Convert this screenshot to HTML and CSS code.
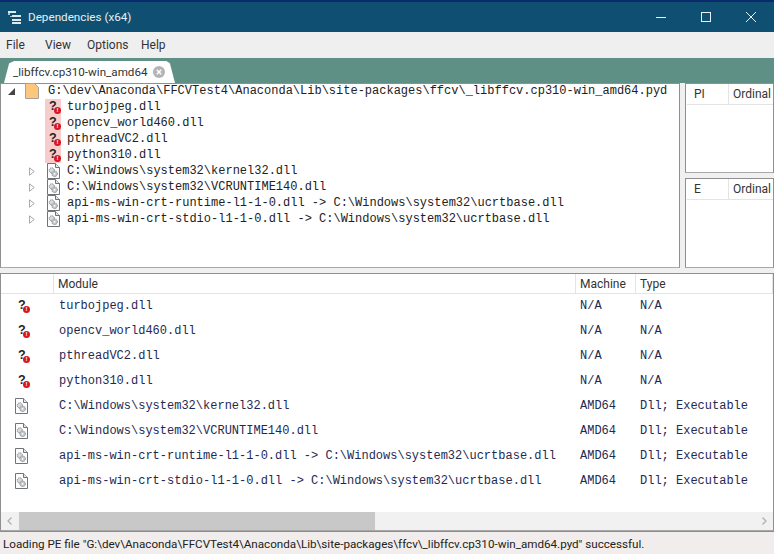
FILE: index.html
```html
<!DOCTYPE html>
<html lang="en">
  <head>
    <meta charset="UTF-8" />
    <title>Dependencies (x64)</title>
    <link rel="stylesheet" href="styles.css">
  </head>
  <body>
    <svg class="defs" width="0" height="0">
      <symbol id="dll" viewBox="0 0 14 16">
        <path d="M1.5 .5H9.5L13.5 4.5V15.5H1.5Z" fill="#fff" stroke="#6e7478"/>
        <path d="M9.5 .5V4.5H13.5" fill="#e4e6e8" stroke="#6e7478"/>
        <circle cx="5.8" cy="7.4" r="2.6" fill="#d6d8da" stroke="#8b8f92" stroke-dasharray="1.4 .6"/>
        <circle cx="8.6" cy="10.8" r="2.8" fill="#c4c7c9" stroke="#8b8f92" stroke-dasharray="1.4 .6"/>
        <circle cx="8.6" cy="10.8" r=".9" fill="#fff"/>
      </symbol>
      <symbol id="closed" viewBox="0 0 6 9">
        <path d="M.5 .8V8.2L5.2 4.5Z" fill="#fff" stroke="#a4a8ab"/>
      </symbol>
    </svg>

    <div class="topline"></div>

    <header class="titlebar">
      <svg class="appicon" width="14" height="14" viewBox="0 0 14 14">
        <path d="M0 1H8V3H0ZM4 5H13V7H4ZM4 9H13V11H4ZM4 12H13V14H4Z" fill="#dcebf2"/>
        <path d="M0 3H2V5H0ZM2 6H4V7H2Z" fill="#9fc0d0"/>
      </svg>
      <span class="app-title">Dependencies (x64)</span>
      <div class="winbtns">
        <svg width="12" height="12" viewBox="0 0 12 12"><path d="M1 6.5H11" stroke="#e8f2f6"/></svg>
        <svg width="12" height="12" viewBox="0 0 12 12"><rect x="1.5" y="1.5" width="9" height="9" fill="none" stroke="#e8f2f6"/></svg>
        <svg width="12" height="12" viewBox="0 0 12 12"><path d="M1 1L11 11M11 1L1 11" stroke="#e8f2f6"/></svg>
      </div>
    </header>

    <nav class="menubar">
      <span>File</span><span>View</span><span>Options</span><span>Help</span>
    </nav>

    <div class="tabstrip">
      <div class="tab">
        <span>_libffcv.cp310-win_amd64</span>
        <svg width="12" height="12" viewBox="0 0 12 12">
          <circle cx="6" cy="6" r="6" fill="#b4b4b4"/>
          <path d="M3.8 3.8L8.2 8.2M8.2 3.8L3.8 8.2" stroke="#fff" stroke-width="1.5"/>
        </svg>
      </div>
    </div>

    <main class="workspace">
      <div class="upper">
        <section class="pane tree">
          <div class="tree-row">
            <svg class="arrow" width="9" height="9" viewBox="0 0 9 9"><path d="M8 1V8H1Z" fill="#444"/></svg>
            <svg class="root-icon" width="14" height="16" viewBox="0 0 14 16"><path d="M.5 .5H9.5L13.5 4.5V15.5H.5Z" fill="#fcc67c" stroke="#a8a29a"/></svg>
            <span>G:\dev\Anaconda\FFCVTest4\Anaconda\Lib\site-packages\ffcv\_libffcv.cp310-win_amd64.pyd</span>
          </div>
          <div class="tree-row child"><i class="missing pink">?<b>!</b></i><span>turbojpeg.dll</span></div>
          <div class="tree-row child"><i class="missing pink">?<b>!</b></i><span>opencv_world460.dll</span></div>
          <div class="tree-row child"><i class="missing pink">?<b>!</b></i><span>pthreadVC2.dll</span></div>
          <div class="tree-row child"><i class="missing pink">?<b>!</b></i><span>python310.dll</span></div>
          <div class="tree-row branch"><svg class="tri" width="6" height="9"><use href="#closed"/></svg><svg class="page" width="14" height="16"><use href="#dll"/></svg><span>C:\Windows\system32\kernel32.dll</span></div>
          <div class="tree-row branch"><svg class="tri" width="6" height="9"><use href="#closed"/></svg><svg class="page" width="14" height="16"><use href="#dll"/></svg><span>C:\Windows\system32\VCRUNTIME140.dll</span></div>
          <div class="tree-row branch"><svg class="tri" width="6" height="9"><use href="#closed"/></svg><svg class="page" width="14" height="16"><use href="#dll"/></svg><span>api-ms-win-crt-runtime-l1-1-0.dll -&gt; C:\Windows\system32\ucrtbase.dll</span></div>
          <div class="tree-row branch"><svg class="tri" width="6" height="9"><use href="#closed"/></svg><svg class="page" width="14" height="16"><use href="#dll"/></svg><span>api-ms-win-crt-stdio-l1-1-0.dll -&gt; C:\Windows\system32\ucrtbase.dll</span></div>
        </section>
        <div class="side">
          <section class="pane side-pane">
            <div class="side-head"><span class="pi">PI</span><span>Ordinal</span></div>
          </section>
          <section class="pane side-pane">
            <div class="side-head"><span class="pi">E</span><span>Ordinal</span></div>
          </section>
        </div>
      </div>

      <section class="pane modules">
        <div class="mod-head">
          <span class="c-icon"></span>
          <span class="c-name">Module</span>
          <span class="c-mach">Machine</span>
          <span class="c-type">Type</span>
        </div>
        <div class="mod-body">
          <div class="mod-row"><span class="c-icon"><i class="missing">?<b>!</b></i></span><span class="c-name">turbojpeg.dll</span><span class="c-mach">N/A</span><span class="c-type">N/A</span></div>
          <div class="mod-row"><span class="c-icon"><i class="missing">?<b>!</b></i></span><span class="c-name">opencv_world460.dll</span><span class="c-mach">N/A</span><span class="c-type">N/A</span></div>
          <div class="mod-row"><span class="c-icon"><i class="missing">?<b>!</b></i></span><span class="c-name">pthreadVC2.dll</span><span class="c-mach">N/A</span><span class="c-type">N/A</span></div>
          <div class="mod-row"><span class="c-icon"><i class="missing">?<b>!</b></i></span><span class="c-name">python310.dll</span><span class="c-mach">N/A</span><span class="c-type">N/A</span></div>
          <div class="mod-row"><span class="c-icon"><svg width="14" height="16"><use href="#dll"/></svg></span><span class="c-name">C:\Windows\system32\kernel32.dll</span><span class="c-mach">AMD64</span><span class="c-type">Dll; Executable</span></div>
          <div class="mod-row"><span class="c-icon"><svg width="14" height="16"><use href="#dll"/></svg></span><span class="c-name">C:\Windows\system32\VCRUNTIME140.dll</span><span class="c-mach">AMD64</span><span class="c-type">Dll; Executable</span></div>
          <div class="mod-row"><span class="c-icon"><svg width="14" height="16"><use href="#dll"/></svg></span><span class="c-name">api-ms-win-crt-runtime-l1-1-0.dll -&gt; C:\Windows\system32\ucrtbase.dll</span><span class="c-mach">AMD64</span><span class="c-type">Dll; Executable</span></div>
          <div class="mod-row"><span class="c-icon"><svg width="14" height="16"><use href="#dll"/></svg></span><span class="c-name">api-ms-win-crt-stdio-l1-1-0.dll -&gt; C:\Windows\system32\ucrtbase.dll</span><span class="c-mach">AMD64</span><span class="c-type">Dll; Executable</span></div>
        </div>
        <div class="hscroll">
          <svg width="18" height="18" viewBox="0 0 18 18"><path d="M10.5 5.5L7 9L10.5 12.5" fill="none" stroke="#b0b0b0" stroke-width="1.3"/></svg>
          <div class="thumb"></div>
          <svg width="18" height="18" viewBox="0 0 18 18"><path d="M7.5 5.5L11 9L7.5 12.5" fill="none" stroke="#b0b0b0" stroke-width="1.3"/></svg>
        </div>
      </section>
    </main>

    <footer class="status">Loading PE file "G:\dev\Anaconda\FFCVTest4\Anaconda\Lib\site-packages\ffcv\_libffcv.cp310-win_amd64.pyd" successful.</footer>
  </body>
</html>
```

FILE: styles.css
```css
:root {
  --title: #0f4f72;
  --strip: #5f9085;
  --chrome: #f0f0f0;
  --line: #8f8f8f;
  --mono: #1f2a52;
}

html, body {
  height: 100%;
}

body {
  margin: 0;
  display: flex;
  flex-direction: column;
  height: 554px;
  overflow: hidden;
  background: var(--chrome);
  font-family: "Roboto", "Noto Sans", sans-serif;
  font-size: 12px;
  color: #222;
}

.defs {
  position: absolute;
}

.topline {
  height: 2px;
  background: #0b2a6b;
}

.titlebar {
  height: 30px;
  display: flex;
  align-items: center;
  padding-left: 8px;
  background: var(--title);
  color: #e4f0f5;
  font-size: 11.7px;
}

.app-title {
  margin-left: 6px;
  flex: 1;
}

.winbtns {
  display: flex;
  gap: 33px;
  padding-right: 17px;
}

.menubar {
  height: 26px;
  display: grid;
  grid-template-columns: 39px 42px 54px auto;
  align-items: center;
  justify-content: start;
  padding-left: 6px;
  background: #efefef;
  color: #333;
}

.tabstrip {
  height: 25px;
  display: flex;
  align-items: flex-end;
  padding-left: 4px;
  background: var(--strip);
}

.tab {
  width: 171px;
  height: 22px;
  box-sizing: border-box;
  display: flex;
  align-items: center;
  justify-content: space-between;
  padding: 0 10px 0 9px;
  background: #fff;
  border-radius: 6px 8px 0 0;
  clip-path: polygon(0 100%, 3% 10%, 6% 0, 95% 0, 97% 10%, 100% 100%);
  color: #333;
  font-size: 11.65px;
  white-space: nowrap;
}

.workspace {
  flex: 1;
  display: flex;
  flex-direction: column;
  gap: 5px;
  min-height: 0;
}

.upper {
  height: 185px;
  display: flex;
  gap: 5px;
}

.pane {
  box-sizing: border-box;
  background: #fff;
  border: 1px solid var(--line);
  border-bottom-color: #a8a8a8;
}

.tree {
  width: 680px;
  font-family: "Liberation Mono", monospace;
  color: #222;
}

.tree-row {
  height: 16px;
  display: flex;
  align-items: center;
  white-space: nowrap;
}

.tree-row:first-child {
  margin-top: -1px;
  padding-left: 6px;
}

.tree-row span {
  margin-left: 5px;
}

.tree-row.child span {
  margin-left: 6px;
}

.root-icon {
  margin-left: 9px;
  margin-right: 4px;
}

.arrow,
.tri,
.page {
  flex: none;
}

.child {
  padding-left: 44px;
}

.branch {
  padding-left: 28px;
}

.page {
  margin-left: 11px;
  margin-right: 2px;
}

.missing {
  position: relative;
  display: block;
  width: 16px;
  height: 16px;
  flex: none;
  font: bold 12.5px/14px "Liberation Sans", sans-serif;
  color: #2b2020;
  padding-left: 4px;
  box-sizing: border-box;
}

.missing b {
  position: absolute;
  right: 0;
  bottom: 1px;
  width: 7px;
  height: 7px;
  border-radius: 50%;
  background: #d9161f;
  color: #fff;
  font-size: 6px;
  line-height: 7px;
  text-align: center;
}

.pink {
  background: #f6cccc;
}

.side {
  flex: 1;
  display: flex;
  flex-direction: column;
  gap: 5px;
  min-width: 0;
}

.side-pane {
  flex: 1;
  overflow: hidden;
}

.side-head {
  height: 20px;
  display: flex;
  align-items: center;
  margin-left: 1px;
  border-bottom: 1px solid #e4e4e4;
  color: #333;
}

.side-head span {
  padding-left: 4px;
}

.side-head .pi {
  width: 42px;
  flex: none;
  height: 20px;
  line-height: 20px;
  padding-left: 7px;
  box-sizing: border-box;
  border-right: 1px solid #e4e4e4;
}

.modules {
  flex: 1;
  min-height: 0;
  display: flex;
  flex-direction: column;
}

.mod-head,
.mod-row {
  display: flex;
  align-items: center;
}

.mod-head {
  height: 19px;
  border-bottom: 1px solid #e4e4e4;
  color: #333;
}

.mod-head span {
  height: 19px;
  line-height: 21px;
  box-sizing: border-box;
  border-right: 1px solid #e4e4e4;
  padding-left: 4px;
}

.c-icon {
  width: 53px;
  flex: none;
  padding-left: 13px;
  box-sizing: border-box;
}

.c-name {
  width: 522px;
  flex: none;
}

.c-mach {
  width: 60px;
  flex: none;
}

.c-type {
  flex: 1;
}

.mod-body {
  flex: 1;
  margin-top: -1px;
  font-family: "Liberation Mono", monospace;
  color: var(--mono);
}

.mod-row {
  height: 25px;
}

.mod-row .c-name,
.mod-row .c-mach,
.mod-row .c-type {
  padding-left: 5px;
  box-sizing: border-box;
  white-space: nowrap;
}

.mod-row .c-mach,
.mod-row .c-type {
  padding-left: 4px;
}

.mod-row .c-icon {
  display: flex;
}

.hscroll {
  height: 18px;
  display: flex;
  align-items: center;
  background: #f1f1f1;
}

.thumb {
  flex: 1;
  height: 18px;
  margin-right: 380px;
  background: #c8c8c8;
}

.status {
  height: 23px;
  line-height: 25px;
  padding-left: 3px;
  background: #f1eded;
  border-top: 1px solid #8c8c8c;
  box-sizing: border-box;
  color: #222;
  font-size: 11.65px;
  white-space: nowrap;
}
```
